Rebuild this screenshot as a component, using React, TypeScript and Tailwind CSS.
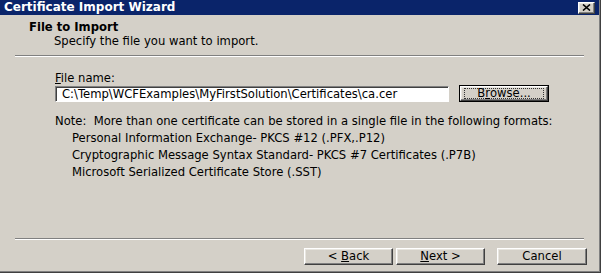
import React from "react";

const raised =
  "border border-t-white border-l-white border-b-[#404040] border-r-[#404040] shadow-[inset_-1px_-1px_0_#808080,inset_1px_1px_0_#e8e6e0]";

function Btn({ children, w }: { children: React.ReactNode; w: string }) {
  return (
    <div className={`${w} h-[17px] bg-[#d4d0c8] ${raised} flex items-center justify-center text-[11.6px] leading-[13px] text-black whitespace-pre`}>
      {children}
    </div>
  );
}

export default function App() {
  return (
    <div className="w-[604px] h-[276px] bg-white" style={{ fontFamily: '"DejaVu Sans", Verdana, sans-serif' }}>
      <div className="w-[601px] h-[273px] border-b border-r border-[#404040]">
        <div className="w-full h-full bg-[#d4d0c8] border-b border-r border-[#808080] flex flex-col">
          {/* title bar */}
          <div className="h-[15px] bg-[#0a246a] flex items-center justify-between pl-[4px] pr-[4px]">
            <span className="text-white font-bold text-[12px] leading-[15px]">Certificate Import Wizard</span>
            <div className={`w-[17px] h-[12px] bg-[#d4d0c8] ${raised} flex items-center justify-center`}>
              <svg width="9" height="7" viewBox="0 0 9 7">
                <path d="M1 0.5 L8 6.5 M8 0.5 L1 6.5" stroke="#000" strokeWidth="1.6" />
              </svg>
            </div>
          </div>

          {/* header */}
          <div className="pl-[29px] mt-[6px] text-[11.6px] leading-[13px] font-bold text-black">File to Import</div>
          <div className="pl-[54px] mt-[1px] text-[11.6px] leading-[13px] text-black">Specify the file you want to import.</div>
          <div className="mx-[15px] mt-[7px] h-[2px] border-t border-t-[#808080] border-b border-b-white" />

          {/* content */}
          <div className="pl-[55px] pr-[12px] flex flex-col text-[11.6px] text-black">
            <div className="mt-[15px] leading-[13px]">
              <span className="underline">F</span>ile name:
            </div>
            <div className="flex items-end h-[17px] gap-[10px]">
              <div className="w-[394px] h-[16px] bg-white border border-t-[#808080] border-l-[#808080] border-b-white border-r-white shadow-[inset_1px_1px_0_#404040] flex items-center pl-[6px] leading-[13px] whitespace-nowrap overflow-hidden">
                C:\Temp\WCFExamples\MyFirstSolution\Certificates\ca.cer
              </div>
              <div className="w-[90px] h-[17px] border border-black">
                <div className={`w-full h-full bg-[#d4d0c8] ${raised} flex items-center justify-center px-[3px] py-[1px]`}>
                  <div className="w-full h-full border border-dotted border-[#333] flex items-center justify-center leading-[11px]">
                    B<span className="underline">r</span>owse...
                  </div>
                </div>
              </div>
            </div>
            <div className="mt-[13px] leading-[13px] whitespace-pre">Note:  More than one certificate can be stored in a single file in the following formats:</div>
            <div className="mt-[2px] pl-[17px] leading-[17px] flex flex-col">
              <div>Personal Information Exchange- PKCS #12 (.PFX,.P12)</div>
              <div>Cryptographic Message Syntax Standard- PKCS #7 Certificates (.P7B)</div>
              <div>Microsoft Serialized Certificate Store (.SST)</div>
            </div>
          </div>

          <div className="flex-1" />
          <div className="mx-[15px] h-[2px] border-t border-t-[#808080] border-b border-b-white" />
          <div className="mt-[8px] mb-[6px] flex justify-end pr-[12px]">
            <Btn w="w-[89px]">
              {"< "}
              <span className="underline">B</span>
              {"ack"}
            </Btn>
            <div className="w-[3px]" />
            <Btn w="w-[89px]">
              <span className="underline">N</span>
              {"ext >"}
            </Btn>
            <div className="w-[12px]" />
            <Btn w="w-[90px]">Cancel</Btn>
          </div>
        </div>
      </div>
    </div>
  );
}
